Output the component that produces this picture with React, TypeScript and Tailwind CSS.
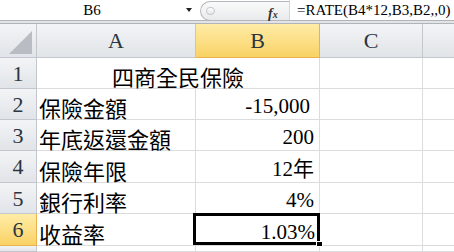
const serif = "font-['Liberation_Serif','Noto_Sans_CJK_TC',serif]"
const cjk = "font-['Noto_Sans_CJK_TC','Noto_Sans_CJK_SC',sans-serif]"

const hdr = "border-r border-b border-[#c3c7cd] bg-gradient-to-b from-[#f3f4f6] to-[#e1e4e8] flex items-center justify-center text-[22px] text-[#2b3440] " + serif
const hdrOn = "border-r border-b border-[#e9b24a] bg-gradient-to-b from-[#ffeca6] to-[#f9d264] flex items-center justify-center text-[22px] text-[#2b3440] " + serif
const cell = "border-r border-b border-[#dadcdd] flex items-end"

const rows = [
  { n: 2, label: "保險金額", value: "-15,000", pad: "pr-[9px]" },
  { n: 3, label: "年底返還金額", value: "200", pad: "pr-[5px]" },
  { n: 4, label: "保險年限", value: "12年", pad: "pr-[5px]" },
  { n: 5, label: "銀行利率", value: "4%", pad: "pr-[5px]" },
  { n: 6, label: "收益率", value: "1.03%", pad: "pr-[4px]" },
]

export default function App() {
  return (
    <div className="relative w-[454px] h-[252px] overflow-hidden bg-white">
      {/* formula bar */}
      <div className="flex h-[20px] bg-white">
        <div className={"relative w-[196px] flex items-center justify-center text-[15px] text-black " + serif}>
          <span className="ml-[-12px] leading-none">B6</span>
          <span className="absolute right-[4px] top-[8px] w-0 h-0 border-x-[3px] border-x-transparent border-t-[4px] border-t-[#222]"></span>
        </div>
        <div className="relative ml-[4px] w-[89px] h-[20px] mt-[1px] rounded-l-full border border-r-0 border-[#b4b7bb] bg-gradient-to-b from-[#fafafa] to-[#e9eaec] flex items-center">
          <span className="ml-[5px] w-[9px] h-[8px] rounded-full border border-[#c4c6c9] bg-gradient-to-b from-white to-[#e4e5e7]"></span>
          <span className={"absolute left-[67px] top-[1px] italic font-bold text-[14px] text-[#333] " + serif}>
            f<span className="text-[10px]">x</span>
          </span>
        </div>
        <div className="w-px bg-[#d4d4d4]"></div>
        <div className={"pl-[7px] flex items-center text-[15px] text-black whitespace-nowrap " + serif}>
          =RATE(B4*12,B3,B2,,0)
        </div>
      </div>
      <div className="h-[4px] border-t border-b border-[#b0b3b8] bg-[#e2e4e7]"></div>

      {/* sheet */}
      <div className="grid grid-cols-[37px_159px_124px_103px_1fr] grid-rows-[34px_31px_31px_31px_32px_31px_32px_1fr] h-[228px]">
        <div className={hdr + " relative"}>
          <div className="absolute left-[9px] top-[7px] w-0 h-0 border-l-[23px] border-l-transparent border-b-[23px] border-b-[#b9bdc3]"></div>
        </div>
        <div className={hdr}>A</div>
        <div className={hdrOn}>B</div>
        <div className={hdr}>C</div>
        <div className={hdr + " border-r-0"}></div>

        <div className={hdr}>1</div>
        <div className={cell + " col-span-2 justify-center pb-[1px]"}>
          <span className={"text-[22px] leading-none text-black " + cjk}>四商全民保險</span>
        </div>
        <div className={cell}></div>
        <div className={cell + " border-r-0"}></div>

        {rows.map((r) => (
          <>
            <div key={"h" + r.n} className={r.n === 6 ? hdrOn : hdr}>{r.n}</div>
            <div key={"a" + r.n} className={cell + " pl-[2px] pb-[1px]"}>
              <span className={"text-[22px] leading-none text-black " + cjk}>{r.label}</span>
            </div>
            <div key={"b" + r.n} className={cell + " justify-end pb-[2px] " + r.pad}>
              <span className={"text-[21px] leading-none text-black " + serif}>{r.value}</span>
            </div>
            <div key={"c" + r.n} className={cell}></div>
            <div key={"d" + r.n} className={cell + " border-r-0"}></div>
          </>
        ))}

        <div className={hdr}></div>
        <div className={cell}></div>
        <div className={cell}></div>
        <div className={cell}></div>
        <div className={cell + " border-r-0"}></div>
      </div>

      {/* active cell */}
      <div className="absolute left-[193px] top-[213px] w-[127px] h-[32px] border-[3px] border-black pointer-events-none"></div>
      <div className="absolute left-[316px] top-[241px] w-[7px] h-[6px] bg-black border border-white"></div>
    </div>
  )
}
